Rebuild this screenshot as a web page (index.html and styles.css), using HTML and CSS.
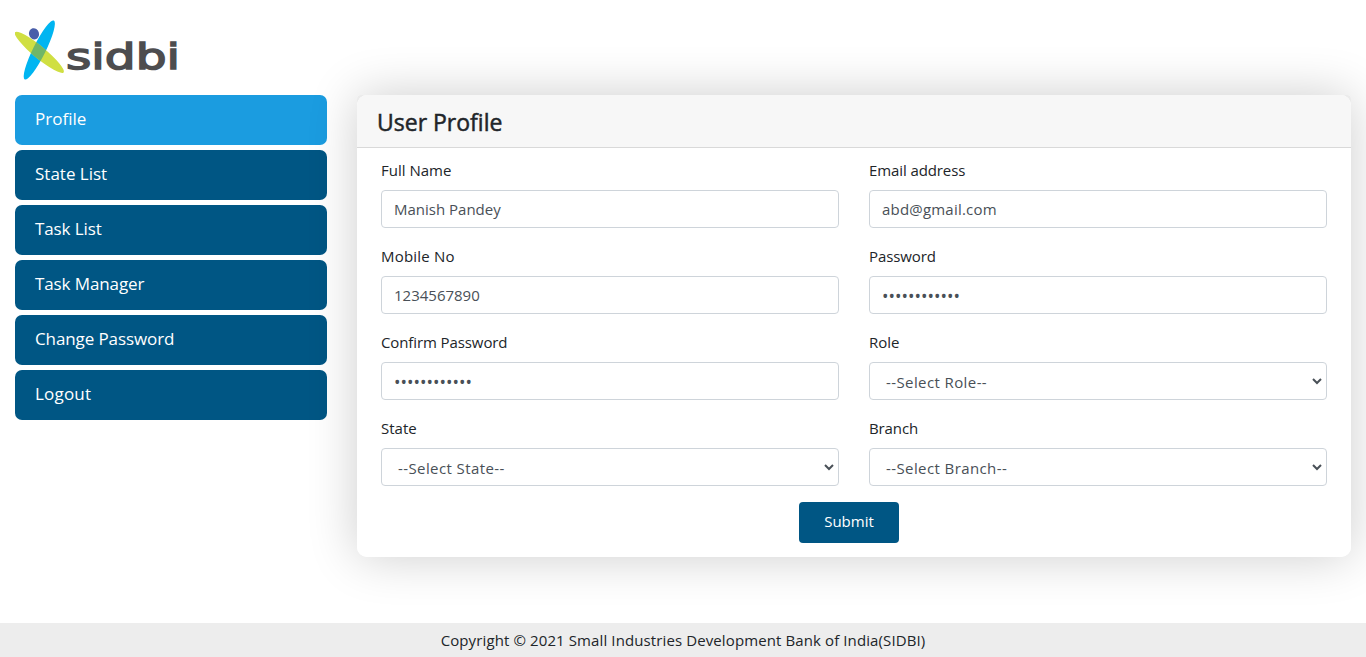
FILE: index.html
```html
<!DOCTYPE html>
<html lang="en">
<head>
<meta charset="utf-8">
<title>User Profile</title>
<link rel="stylesheet" href="styles.css">
</head>
<body>
<header class="topbar">
  <svg class="logo" width="170" height="64" viewBox="0 0 170 64" role="img" aria-label="sidbi">
    <defs>
      <clipPath id="blue-leaf"><ellipse cx="24.300" cy="32" rx="6.300" ry="32.800" transform="rotate(26.300 24.300 32)"/></clipPath>
    </defs>
    <ellipse cx="24.300" cy="32" rx="6.300" ry="32.800" transform="rotate(26.300 24.300 32)" fill="#00b5f1"/>
    <ellipse cx="24.300" cy="34.300" rx="31.500" ry="6" transform="rotate(39.600 24.300 34.300)" fill="#d0df42"/>
    <g clip-path="url(#blue-leaf)">
      <ellipse cx="24.300" cy="34.300" rx="31.500" ry="6" transform="rotate(39.600 24.300 34.300)" fill="#70b667"/>
    </g>
    <ellipse cx="19" cy="15.800" rx="5" ry="5.700" transform="rotate(-15 19 15.800)" fill="#485da9"/>
    <text class="logo-text" x="51" y="51" textLength="114" lengthAdjust="spacingAndGlyphs">sidbi</text>
  </svg>
</header>
<main class="layout">
  <nav class="menu">
    <a class="menu-item menu-item-active">Profile</a>
    <a class="menu-item">State List</a>
    <a class="menu-item menu-item-tight">Task List</a>
    <a class="menu-item menu-item-tight">Task Manager</a>
    <a class="menu-item menu-item-tight">Change Password</a>
    <a class="menu-item menu-item-wide">Logout</a>
  </nav>
  <section class="card">
    <div class="card-inner">
      <h1 class="card-header">User Profile</h1>
      <form class="form">
        <div class="field"><label class="label">Full Name</label><div class="control">Manish Pandey</div></div>
        <div class="field"><label class="label label-tight">Email address</label><div class="control email">abd@gmail.com</div></div>
        <div class="field"><label class="label label-wide">Mobile No</label><div class="control">1234567890</div></div>
        <div class="field"><label class="label label-tight">Password</label><div class="control dots">••••••••••••</div></div>
        <div class="field"><label class="label label-tight">Confirm Password</label><div class="control dots">••••••••••••</div></div>
        <div class="field"><label class="label">Role</label><div class="control select"><span>--Select Role--</span><svg class="chevron" width="10" height="7" viewBox="0 0 10 7"><path d="M1 1L5 5L9 1"/></svg></div></div>
        <div class="field"><label class="label">State</label><div class="control select"><span>--Select State--</span><svg class="chevron" width="10" height="7" viewBox="0 0 10 7"><path d="M1 1L5 5L9 1"/></svg></div></div>
        <div class="field"><label class="label label-tight">Branch</label><div class="control select"><span>--Select Branch--</span><svg class="chevron" width="10" height="7" viewBox="0 0 10 7"><path d="M1 1L5 5L9 1"/></svg></div></div>
      </form>
      <div class="actions"><button class="submit" type="button">Submit</button></div>
    </div>
  </section>
</main>
<footer class="footer">Copyright © 2021 Small Industries Development Bank of India(SIDBI)</footer>
</body>
</html>
```
FILE: styles.css
```css
* { box-sizing: border-box; }
body {
  margin: 0;
  height: 657px;
  display: flex;
  flex-direction: column;
  overflow: hidden;
  background: #fff;
  color: #212529;
  font: 15px/24px "Open Sans", "Noto Sans", sans-serif;
}
.topbar { height: 95px; padding: 18px 15px 0; }
.logo { display: block; }
.logo-text {
  font: 36px "DejaVu Sans", sans-serif;
  fill: #4d4d4f;
  stroke: #4d4d4f;
  stroke-width: 1.5px;
}
.layout {
  flex: 1;
  display: grid;
  grid-template-columns: 312px 994px;
  column-gap: 30px;
  align-items: start;
  padding: 0 15px;
}
.menu { display: flex; flex-direction: column; gap: 5px; }
.menu-item {
  height: 50px;
  padding: 10px 20px;
  border-radius: 7px;
  background: #005684;
  color: #fff;
  font-size: 17px;
  line-height: 27px;
}
.menu-item-active { background: #1b9ce0; }
.menu-item-tight { letter-spacing: -.1px; }
.menu-item-wide { letter-spacing: .2px; }
.card {
  height: 462px;
  border-radius: 4px 4px 10px 10px;
  background: linear-gradient(#ebebeb 50px, transparent 50px);
  box-shadow: 0 0 50px rgba(0, 0, 0, .2);
}
.card-inner { height: 100%; border-radius: 10px; background: #fff; overflow: hidden; }
.card-header {
  margin: 0;
  height: 53px;
  padding: 13px 20px;
  border-bottom: 1px solid #d9d9d9;
  background: #f7f7f7;
  font-size: 23px;
  font-weight: 400;
  -webkit-text-stroke: .5px #212529;
  line-height: 29px;
}
.form {
  display: grid;
  grid-template-columns: 458px 458px;
  gap: 16px 30px;
  padding: 10px 24px 0;
}
.field { height: 70px; }
.label { display: block; height: 32px; line-height: 24px; }
.label-wide { letter-spacing: .2px; }
.label-tight { letter-spacing: -.1px; }
.control {
  height: 38px;
  padding: 0 12px;
  border: 1px solid #ced4da;
  border-radius: 4px;
  color: #495057;
  line-height: 37px;
}
.email { letter-spacing: .2px; }
.dots { font-size: 17.300px; line-height: 39px; }
.select {
  display: flex;
  align-items: center;
  justify-content: space-between;
  padding: 0 4px 0 16px;
  letter-spacing: .4px;
}
.select span { padding-top: 2px; }
.chevron { fill: none; stroke: #495057; stroke-width: 2; }
.actions { display: flex; justify-content: center; padding: 16px 10px 0 0; }
.submit {
  width: 100px;
  height: 41px;
  padding: 0 0 3px;
  border: 0;
  border-radius: 4px;
  background: #005684;
  color: #fff;
  font: inherit;
}
.footer {
  height: 34px;
  background: #ededed;
  text-align: center;
  line-height: 35px;
  letter-spacing: .11px;
}
```
